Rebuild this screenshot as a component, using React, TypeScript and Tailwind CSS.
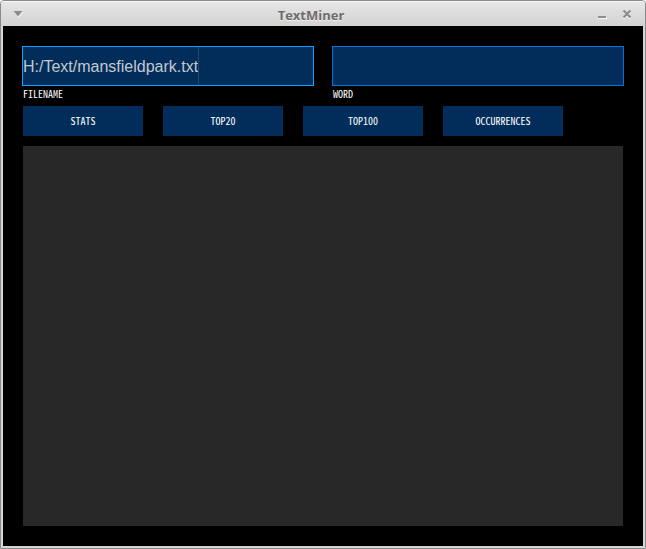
import { useState } from "react";

const actions = ["STATS", "TOP20", "TOP100", "OCCURRENCES"];

const pixelText =
  "font-['Noto_Sans_Mono_CJK_SC','Noto_Sans_Mono_CJK_JP','DejaVu_Sans_Mono',monospace] text-[10px] leading-3 text-white";

function TitleBar() {
  return (
    <header className="flex h-[25px] items-center border-t border-[#f8f8f8] bg-linear-to-b from-[#e6e6e6] to-[#d2d2d2] pr-[13px] pl-3">
      <button type="button" aria-label="Window menu" className="flex w-3">
        <svg width="10" height="8" viewBox="0 0 10 8">
          <path d="M1 2h9l-4.500 6z" fill="#f4f4f4" />
          <path d="M0.500 1h9L5 6.500z" fill="#8c8c8c" />
        </svg>
      </button>
      <h1 className="flex-1 pt-0.5 text-center font-['Open_Sans',sans-serif] text-[13px] leading-5 font-bold text-[#6c6c6c] [text-shadow:0_1px_0_#f2f2f2]">
        TextMiner
      </h1>
      <div className="flex items-center gap-[15px]">
        <button type="button" aria-label="Minimize">
          <svg width="10" height="10" viewBox="0 0 10 10">
            <path d="M1 9h9" stroke="#f8f8f8" strokeWidth="2" />
            <path d="M1 8h8" stroke="#8e8e8e" strokeWidth="2" />
          </svg>
        </button>
        <button type="button" aria-label="Close">
          <svg width="10" height="10" viewBox="0 0 10 10">
            <path d="M1.500 2.500l7 7m0-7l-7 7" stroke="#f8f8f8" strokeWidth="2.400" />
            <path d="M1.500 1.500l7 7m0-7l-7 7" stroke="#8e8e8e" strokeWidth="2.400" />
          </svg>
        </button>
      </div>
    </header>
  );
}

export default function App() {
  const [filename, setFilename] = useState("H:/Text/mansfieldpark.txt");
  const [word, setWord] = useState("");

  return (
    <div className="flex min-h-screen flex-col rounded-t-[4px] border border-[#8a8a8a] bg-[#d6d6d6]">
      <div className="flex flex-1 flex-col overflow-hidden rounded-t-[3px]">
        <TitleBar />
        <main className="mx-0.5 mb-0.5 flex flex-1 flex-col bg-black pt-5 pb-5">
          <div className="grid grid-cols-2 gap-[18px] px-[19px]">
            <div className="relative flex flex-col">
              <input
                id="filename"
                value={filename}
                onChange={(e) => setFilename(e.target.value)}
                className="h-10 w-full border border-[#08a2ff] bg-[#022d5a] pt-0.5 font-['Liberation_Sans',Arial,sans-serif] text-base text-[#c3c8ce] outline-none"
              />
              <span className="absolute top-px left-44 h-[38px] w-px bg-[#1f4a70]" />
              <label htmlFor="filename" className={`mt-0.5 px-px ${pixelText}`}>
                FILENAME
              </label>
            </div>
            <div className="flex flex-col">
              <input
                id="word"
                value={word}
                onChange={(e) => setWord(e.target.value)}
                className="h-10 w-full border border-[#0074d9] bg-[#022d5a] pt-0.5 font-['Liberation_Sans',Arial,sans-serif] text-base text-[#c3c8ce] outline-none"
              />
              <label htmlFor="word" className={`mt-0.5 px-px ${pixelText}`}>
                WORD
              </label>
            </div>
          </div>
          <div className="mt-1.5 flex gap-5 px-5">
            {actions.map((action) => (
              <button key={action} type="button" className={`h-[30px] w-30 bg-[#022d5a] ${pixelText}`}>
                {action}
              </button>
            ))}
          </div>
          <div className="mt-2.5 flex flex-1 px-5">
            <textarea
              readOnly
              aria-label="Results"
              className="w-full flex-1 resize-none bg-[#282828] p-2 text-white outline-none"
            />
          </div>
        </main>
      </div>
    </div>
  );
}
